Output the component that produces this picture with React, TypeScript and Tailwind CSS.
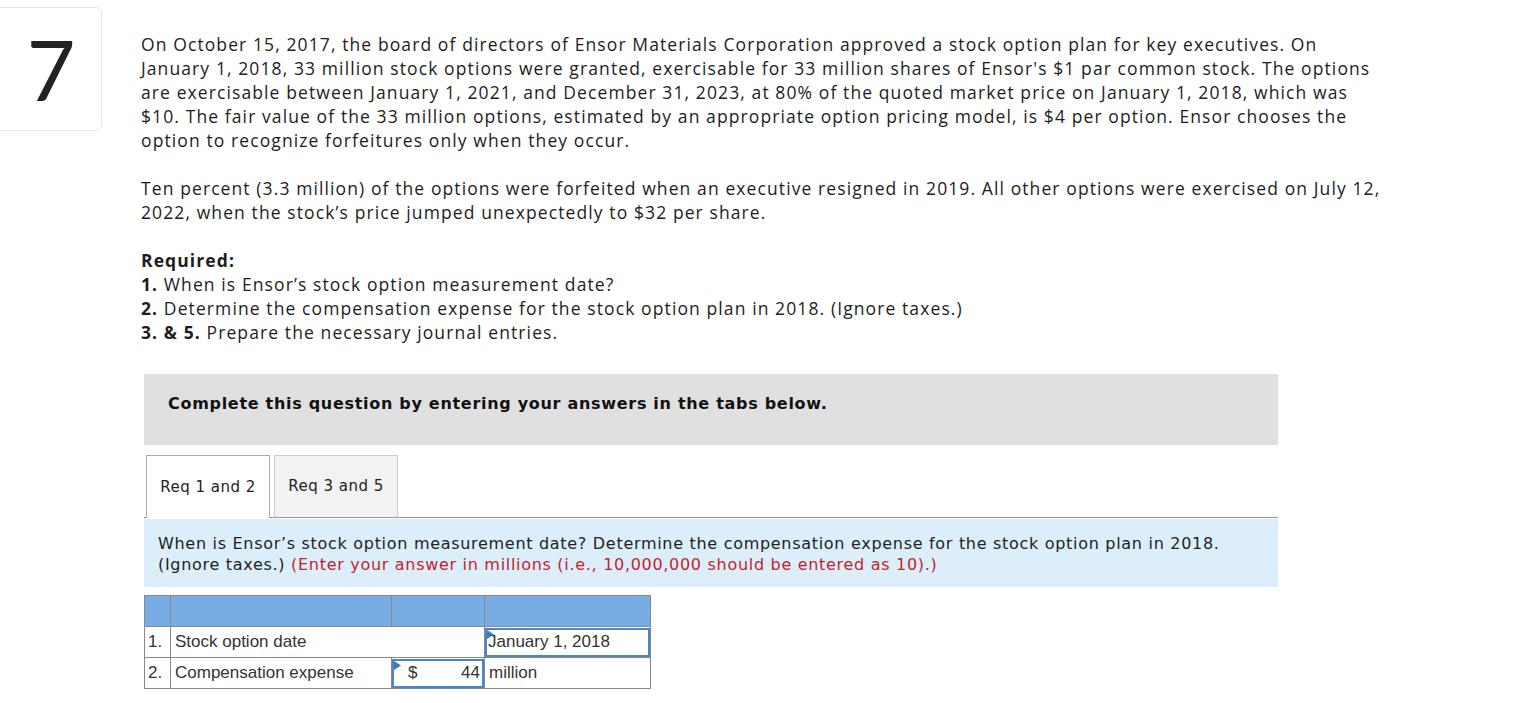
import React from "react";

const body = { fontFamily: "'Open Sans', Lato, sans-serif" };
const verdana = { fontFamily: "'DejaVu Sans', Verdana, sans-serif" };
const arial = { fontFamily: "'Liberation Sans', Arial, sans-serif" };

function Flag() {
    return (
        <svg className="absolute left-0 top-0" width="7" height="9" viewBox="0 0 7 9">
            <path d="M0 0 L7 4.5 L0 9 Z" fill="#3b7ac0" />
        </svg>
    );
}

export default function App() {
    return (
        <div className="min-h-screen bg-white flex items-start text-[#1d1d1d]">
            {/* question number */}
            <div className="mt-[7px] -ml-2 w-[110px] h-[124px] shrink-0 rounded-md border border-[#e6e6e6] flex items-center justify-center pl-2">
                <span className="text-[84px] leading-none text-[#222]" style={{ fontFamily: "Lato, sans-serif" }}>7</span>
            </div>

            <div className="ml-[39px] pt-[32px] w-[1340px]" style={body}>
                <p className="text-[17.5px] leading-6 tracking-[1.1px] whitespace-nowrap">
                    On October 15, 2017, the board of directors of Ensor Materials Corporation approved a stock option plan for key executives. On<br />
                    January 1, 2018, 33 million stock options were granted, exercisable for 33 million shares of Ensor's $1 par common stock. The options<br />
                    are exercisable between January 1, 2021, and December 31, 2023, at 80% of the quoted market price on January 1, 2018, which was<br />
                    $10. The fair value of the 33 million options, estimated by an appropriate option pricing model, is $4 per option. Ensor chooses the<br />
                    option to recognize forfeitures only when they occur.
                </p>
                <p className="text-[17.5px] leading-6 tracking-[1.1px] mt-6 whitespace-nowrap">
                    Ten percent (3.3 million) of the options were forfeited when an executive resigned in 2019. All other options were exercised on July 12,<br />
                    2022, when the stock’s price jumped unexpectedly to $32 per share.
                </p>
                <div className="text-[17.5px] leading-6 tracking-[1.1px] mt-6">
                    <div className="font-bold">Required:</div>
                    <div><span className="font-bold">1.</span> When is Ensor’s stock option measurement date?</div>
                    <div><span className="font-bold">2.</span> Determine the compensation expense for the stock option plan in 2018. (Ignore taxes.)</div>
                    <div><span className="font-bold">3. &amp; 5.</span> Prepare the necessary journal entries.</div>
                </div>

                <div className="ml-[3px] w-[1134px] mt-[30px]">
                    <div className="h-[71px] bg-[#e0e0e0] px-6 pt-[17px]">
                        <span className="text-[16px] leading-5 font-bold text-[#111] tracking-[0.7px]" style={verdana}>
                            Complete this question by entering your answers in the tabs below.
                        </span>
                    </div>

                    {/* tabs */}
                    <div className="mt-[10px] flex items-end border-b border-[#999] pl-[2px] gap-[4px]" style={verdana}>
                        <div className="h-[63px] w-[124px] bg-white border border-[#aaa] border-b-0 -mb-px flex items-center justify-center text-[15px] tracking-[0.5px] text-[#222]">
                            Req 1 and 2
                        </div>
                        <div className="h-[62px] w-[124px] bg-[#f2f2f2] border border-[#ccc] border-b-0 flex items-center justify-center text-[15px] tracking-[0.5px] text-[#222]">
                            Req 3 and 5
                        </div>
                    </div>

                    <div className="mt-px h-[68px] bg-[#dbeefa] px-[14px] pt-[14px] text-[16px] leading-[21px] tracking-[0.7px] text-[#222] whitespace-nowrap" style={verdana}>
                        When is Ensor’s stock option measurement date? Determine the compensation expense for the stock option plan in 2018.<br />
                        (Ignore taxes.) <span className="text-[#c41e2a]">(Enter your answer in millions (i.e., 10,000,000 should be entered as 10).)</span>
                    </div>

                    {/* answer table */}
                    <table className="mt-[8px] border-collapse text-[17px] text-[#333]" style={arial}>
                        <tbody>
                            <tr className="h-[31px] bg-[#77ade3]">
                                <td className="w-[26px] border border-[#888]"></td>
                                <td className="w-[221px] border border-[#888]"></td>
                                <td className="w-[93px] border border-[#888]"></td>
                                <td className="w-[166px] border border-[#888]"></td>
                            </tr>
                            <tr className="h-[31px]">
                                <td className="border border-[#888] pl-[3px]">1.</td>
                                <td className="border border-[#888] pl-[4px]" colSpan={2}>Stock option date</td>
                                <td className="border border-[#888] p-0">
                                    <div className="relative h-[29px] border-2 border-[#4a86c8] flex items-center px-px">
                                        <Flag />
                                        January 1, 2018
                                    </div>
                                </td>
                            </tr>
                            <tr className="h-[31px]">
                                <td className="border border-[#888] pl-[3px]">2.</td>
                                <td className="border border-[#888] pl-[4px]">Compensation expense</td>
                                <td className="border border-[#888] p-0">
                                    <div className="relative h-[29px] border-2 border-[#4a86c8] flex items-center justify-between pl-[14px] pr-[2px]">
                                        <Flag />
                                        <span>$</span>
                                        <span>44</span>
                                    </div>
                                </td>
                                <td className="border border-[#888] pl-[4px]">million</td>
                            </tr>
                        </tbody>
                    </table>
                </div>
            </div>
        </div>
    );
}
